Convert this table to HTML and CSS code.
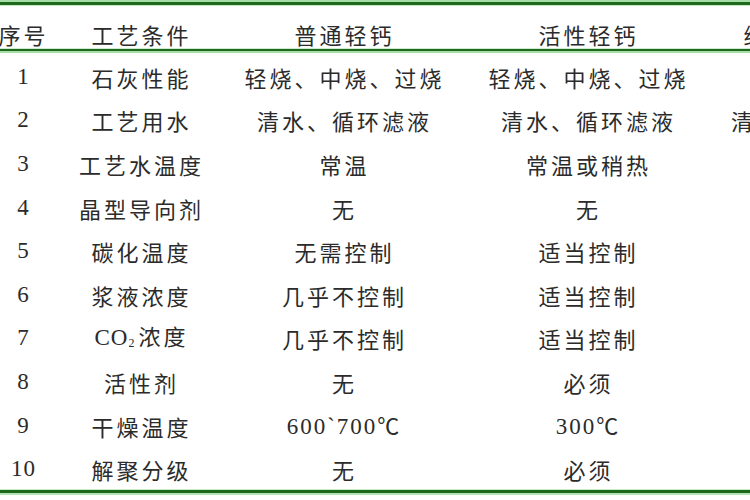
FILE: index.html
```html
<!DOCTYPE html>
<html lang="zh-CN">
<head>
<meta charset="utf-8">
<title>轻钙工艺条件对比</title>
<link rel="stylesheet" href="styles.css">
</head>
<body>
<div class="sheet">
  <div class="rule rule-top"></div>
  <div class="row head">
    <div class="cell">序号</div>
    <div class="cell">工艺条件</div>
    <div class="cell">普通轻钙</div>
    <div class="cell">活性轻钙</div>
    <div class="cell">纳米级活性轻钙</div>
  </div>
  <div class="rule rule-mid"></div>
  <div class="body">
    <div class="row"><div class="cell num">1</div><div class="cell">石灰性能</div><div class="cell">轻烧、中烧、过烧</div><div class="cell">轻烧、中烧、过烧</div><div class="cell">轻烧</div></div>
    <div class="row"><div class="cell num">2</div><div class="cell">工艺用水</div><div class="cell">清水、循环滤液</div><div class="cell">清水、循环滤液</div><div class="cell">清水、循环滤液等</div></div>
    <div class="row"><div class="cell num">3</div><div class="cell">工艺水温度</div><div class="cell">常温</div><div class="cell">常温或稍热</div><div class="cell">冷却</div></div>
    <div class="row"><div class="cell num">4</div><div class="cell">晶型导向剂</div><div class="cell">无</div><div class="cell">无</div><div class="cell">有</div></div>
    <div class="row"><div class="cell num">5</div><div class="cell">碳化温度</div><div class="cell">无需控制</div><div class="cell">适当控制</div><div class="cell">控制</div></div>
    <div class="row"><div class="cell num">6</div><div class="cell">浆液浓度</div><div class="cell">几乎不控制</div><div class="cell">适当控制</div><div class="cell">控制</div></div>
    <div class="row"><div class="cell num">7</div><div class="cell"><span class="latin">CO</span><sub class="sub">2</sub>浓度</div><div class="cell">几乎不控制</div><div class="cell">适当控制</div><div class="cell">控制</div></div>
    <div class="row"><div class="cell num">8</div><div class="cell">活性剂</div><div class="cell">无</div><div class="cell">必须</div><div class="cell">必须</div></div>
    <div class="row"><div class="cell num">9</div><div class="cell">干燥温度</div><div class="cell"><span class="latin wide">600`700</span>℃</div><div class="cell"><span class="latin wide">300</span>℃</div><div class="cell">低温</div></div>
    <div class="row"><div class="cell num">10</div><div class="cell">解聚分级</div><div class="cell">无</div><div class="cell">必须</div><div class="cell">必须</div></div>
  </div>
  <div class="rule rule-bottom"></div>
</div>
</body>
</html>
```

FILE: styles.css
```css
html, body {
  margin: 0;
  padding: 0;
  background: #ffffff;
  overflow: hidden;
}

body {
  width: 750px;
  height: 500px;
  font-family: "Liberation Serif", "Noto Sans CJK SC", serif;
  color: #2b2b2b;
}

.sheet {
  width: 935px;
}

.rule {
  background: #1d6a1f;
  height: 3px;
}

.rule-top {
  border-top: 2px solid #a6dca6;
  border-bottom: 1px solid #c4eac4;
}

.rule-mid {
  border-top: 1px solid #cdeccd;
  height: 2px;
  border-bottom: 2px solid #a8dda8;
}

.rule-bottom {
  border-top: 1px solid #c6eac6;
  border-bottom: 2px solid #b6e3b6;
}

.row {
  display: grid;
  grid-template-columns: 44px 192px 214px 274px 211px;
  align-items: center;
  box-sizing: border-box;
  height: 43.6px;
  padding-top: 4px;
  font-size: 22px;
  line-height: 26px;
  font-family: "Noto Sans CJK SC", sans-serif;
  font-weight: 400;
}

.row.head {
  height: 42px;
  padding-top: 13px;
}

.cell {
  text-align: center;
  white-space: nowrap;
  letter-spacing: 3px;
  padding-left: 3px;
  display: flex;
  justify-content: center;
  align-items: baseline;
}

.num, .latin {
  font-family: "Liberation Serif", serif;
  font-size: 23px;
  letter-spacing: 1px;
}

.wide {
  letter-spacing: 2px;
}

.sub {
  font-family: "Liberation Serif", serif;
  font-size: 12px;
  letter-spacing: 0;
  margin-right: 4px;
  vertical-align: baseline;
  position: relative;
  top: 2px;
}
```
